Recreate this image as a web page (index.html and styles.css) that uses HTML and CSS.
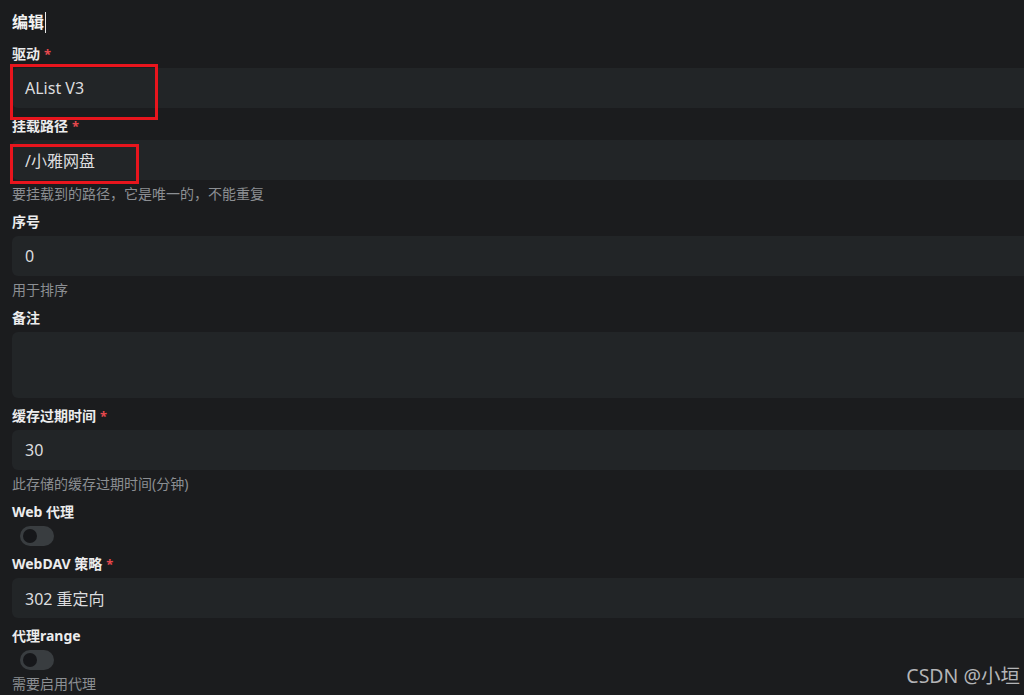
FILE: index.html
```html
<!DOCTYPE html>
<html lang="zh-CN">
<head>
<meta charset="utf-8">
<title>编辑</title>
<link rel="stylesheet" href="styles.css">
</head>
<body>
<main class="page">
  <h1 class="title">编辑<span class="caret"></span></h1>

  <div class="field">
    <label class="label">驱动<span class="req">*</span></label>
    <div class="input">AList V3</div>
  </div>

  <div class="field">
    <label class="label">挂载路径<span class="req">*</span></label>
    <div class="input">/小雅网盘</div>
    <div class="help">要挂载到的路径，它是唯一的，不能重复</div>
  </div>

  <div class="field">
    <label class="label">序号</label>
    <div class="input">0</div>
    <div class="help">用于排序</div>
  </div>

  <div class="field">
    <label class="label">备注</label>
    <div class="input textarea"></div>
  </div>

  <div class="field">
    <label class="label">缓存过期时间<span class="req">*</span></label>
    <div class="input">30</div>
    <div class="help">此存储的缓存过期时间(分钟)</div>
  </div>

  <div class="field">
    <label class="label">Web 代理</label>
    <div class="switch"><span class="knob"></span></div>
  </div>

  <div class="field">
    <label class="label">WebDAV 策略<span class="req">*</span></label>
    <div class="input">302 重定向</div>
  </div>

  <div class="field">
    <label class="label">代理range</label>
    <div class="switch"><span class="knob"></span></div>
    <div class="help">需要启用代理</div>
  </div>
</main>

<div class="mark mark-driver"></div>
<div class="mark mark-path"></div>
<div class="watermark">CSDN @小垣</div>
</body>
</html>
```

FILE: styles.css
```css
html, body {
  margin: 0;
  padding: 0;
  overflow: hidden;
  background: #1b1c1e;
}

body {
  width: 1024px;
  height: 695px;
  position: relative;
  font-family: "Noto Sans", "Noto Sans CJK SC", sans-serif;
  color: #e6e7e8;
}

.page {
  width: 1024px;
  box-sizing: border-box;
  padding: 10px 0 0 12px;
  display: flex;
  flex-direction: column;
  gap: 8px;
}

.title {
  margin: 0 0 2px 0;
  font-size: 16px;
  line-height: 24px;
  font-weight: 700;
  color: #f2f2f2;
  display: flex;
  align-items: center;
}

.caret {
  display: inline-block;
  width: 1px;
  height: 21px;
  background: #e8e8e8;
  margin-left: 1px;
}

.field {
  display: flex;
  flex-direction: column;
}

.label {
  font-size: 14px;
  line-height: 20px;
  font-weight: 700;
  color: #ececed;
  margin-bottom: 4px;
}

.req {
  color: #e5484d;
  margin-left: 4px;
  font-size: 13px;
}

.input {
  height: 40px;
  box-sizing: border-box;
  background: #222527;
  border-radius: 6px 0 0 6px;
  padding: 0 13px;
  display: flex;
  align-items: center;
  font-size: 16px;
  color: #dcdddf;
}

.textarea {
  height: 66px;
}

.help {
  margin-top: 4px;
  font-size: 14px;
  line-height: 20px;
  color: #8c8f93;
}

.switch {
  width: 34px;
  height: 20px;
  margin-left: 8px;
  border-radius: 10px;
  background: #393d40;
  display: flex;
  align-items: center;
  padding-left: 3px;
  box-sizing: border-box;
}

.knob {
  width: 14px;
  height: 14px;
  border-radius: 50%;
  background: #16171a;
}

.mark {
  position: absolute;
  border: 3px solid #e8151d;
  box-sizing: border-box;
}

.mark-driver {
  left: 10px;
  top: 64px;
  width: 148px;
  height: 56px;
}

.mark-path {
  left: 10px;
  top: 144px;
  width: 129px;
  height: 40px;
}

.watermark {
  position: absolute;
  right: 4px;
  top: 662px;
  font-family: "Noto Sans", "Noto Sans CJK SC", sans-serif;
  font-size: 19.5px;
  line-height: 28px;
  color: #b4b5b7;
}
```
